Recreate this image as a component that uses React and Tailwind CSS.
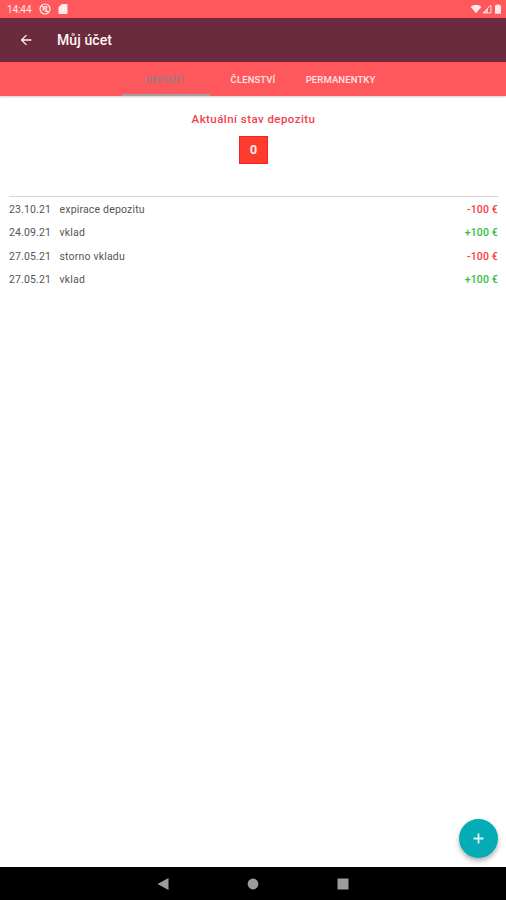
import { MdArrowBack } from 'react-icons/md';

const TABS = [
    { label: 'DEPOZIT', width: 'w-[88px]', active: true },
    { label: 'ČLENSTVÍ', width: 'w-[87px]' },
    { label: 'PERMANENTKY', width: 'w-[88px]' },
];

const TRANSACTIONS = [
    { date: '23.10.21', label: 'expirace depozitu', amount: -100 },
    { date: '24.09.21', label: 'vklad', amount: 100 },
    { date: '27.05.21', label: 'storno vkladu', amount: -100 },
    { date: '27.05.21', label: 'vklad', amount: 100 },
];

function StatusBar() {
    return (
        <div className="h-[18px] shrink-0 bg-[#ff585c] flex items-center pl-[7px] pr-[4px] text-[#ffe9e9]">
            <span className="text-[10px] leading-none tracking-[-0.1px] w-[32px] pt-px">14:44</span>
            <svg viewBox="0 0 12 12" className="w-3 h-3" fill="none" stroke="currentColor">
                <circle cx="6" cy="6" r="5" strokeWidth="1.2" />
                <path d="M2.5 2.5l7 7M4.2 7.8V5.4M5 3.6h2.6v2.2M6.2 8.3h1.4" strokeWidth="1.3" />
            </svg>
            <svg viewBox="0 0 12 12" className="w-3 h-3 ml-[6px]" fill="currentColor">
                <path d="M4.8 1h4.7q1 0 1 1v8q0 1-1 1h-7q-1 0-1-1V4.2z" />
            </svg>
            <div className="flex items-center ml-auto">
                <svg viewBox="0 0 12 10" className="w-3 h-[10px]" fill="currentColor">
                    <path d="M6 9.3L.6 2.8C3.6.1 8.4.1 11.4 2.8z" />
                </svg>
                <svg viewBox="0 0 10 10" className="w-[10px] h-[10px]">
                    <path d="M9 1v8H1z" fill="none" stroke="currentColor" strokeWidth="0.9" />
                    <path d="M6 4v5H1z" fill="currentColor" fillOpacity="0.8" />
                </svg>
                <svg viewBox="0 0 8 10" className="w-2 h-[10px] ml-[2px]" fill="currentColor">
                    <path d="M2.7.5h2.6v.8h1.7v8.4H1V1.3h1.7z" />
                </svg>
            </div>
        </div>
    );
}

function NavigationBar() {
    return (
        <div className="h-[33px] shrink-0 bg-black flex items-center justify-center gap-[78px] text-[#9c9c9c]">
            <svg viewBox="0 0 12 12" className="w-3 h-3" fill="currentColor">
                <path d="M11.5 0v12L.5 6z" />
            </svg>
            <svg viewBox="0 0 12 12" className="w-3 h-3" fill="currentColor">
                <circle cx="6" cy="6" r="5.4" />
            </svg>
            <svg viewBox="0 0 12 12" className="w-3 h-3" fill="currentColor">
                <rect x="0.5" y="0.5" width="11" height="11" />
            </svg>
        </div>
    );
}

export default function App() {
    return (
        <div className="relative h-screen w-full bg-white flex flex-col overflow-hidden font-['Roboto',sans-serif]">
            <StatusBar />

            <header className="h-[44px] shrink-0 bg-[#6b2b3e] flex items-center pl-[18px] text-[#fff5f5]">
                <MdArrowBack className="w-4 h-4" />
                <h1 className="ml-[23px] text-[14px] leading-none font-medium tracking-[0.1px]">Můj účet</h1>
            </header>

            <nav className="h-[34px] shrink-0 bg-[#ff585c] flex justify-center shadow-[0_1px_2px_rgba(0,0,0,0.2)]">
                {TABS.map((tab) => (
                    <button
                        key={tab.label}
                        className={`${tab.width} pt-[3px] border-b-2 text-[9.5px] leading-none font-medium tracking-[0.12px] whitespace-nowrap ${
                            tab.active ? 'text-[#8f7f87] border-[#ae999c]' : 'text-[#ffe3e3] border-transparent'
                        }`}
                    >
                        {tab.label}
                    </button>
                ))}
            </nav>

            <main className="flex-1 pl-[9px] pr-[8px]">
                {/* Balance */}
                <section className="flex flex-col items-center pt-[16px] h-[100px]">
                    <h2 className="text-[11.5px] leading-[14px] font-medium text-[#f3404a] tracking-[0.44px]">
                        Aktuální stav depozitu
                    </h2>
                    <div className="mt-[10px] w-[29px] h-[28px] bg-[#ff3b30] border border-[#ee2724] flex items-center justify-center text-[13px] font-bold text-[#ffeceb]">
                        0
                    </div>
                </section>

                {/* History */}
                <ul className="border-t border-[#d5d5d5] pt-[1.5px]">
                    {TRANSACTIONS.map((item, i) => (
                        <li key={i} className="h-[23.4px] flex items-center text-[10.5px] leading-none text-[#555]">
                            <span className="w-[50.5px] tracking-[0.15px]">{item.date}</span>
                            <span className="tracking-[0.18px]">{item.label}</span>
                            <span
                                className={`ml-auto font-medium tracking-[0.15px] ${item.amount < 0 ? 'text-[#f73a3a]' : 'text-[#2fbd3c]'}`}
                            >
                                {item.amount > 0 ? '+' : ''}
                                {item.amount} €
                            </span>
                        </li>
                    ))}
                </ul>
            </main>

            <button className="absolute right-[8px] bottom-[42px] w-[39px] h-[39px] rounded-full bg-[#04adb5] text-[#d9f6f7] flex items-center justify-center shadow-[0_3px_5px_rgba(0,0,0,0.3)]">
                <svg viewBox="0 0 11 11" className="w-[11px] h-[11px]" fill="none" stroke="currentColor" strokeWidth="1.8">
                    <path d="M5.5 0.5v10M0.5 5.5h10" />
                </svg>
            </button>

            <NavigationBar />
        </div>
    );
}
